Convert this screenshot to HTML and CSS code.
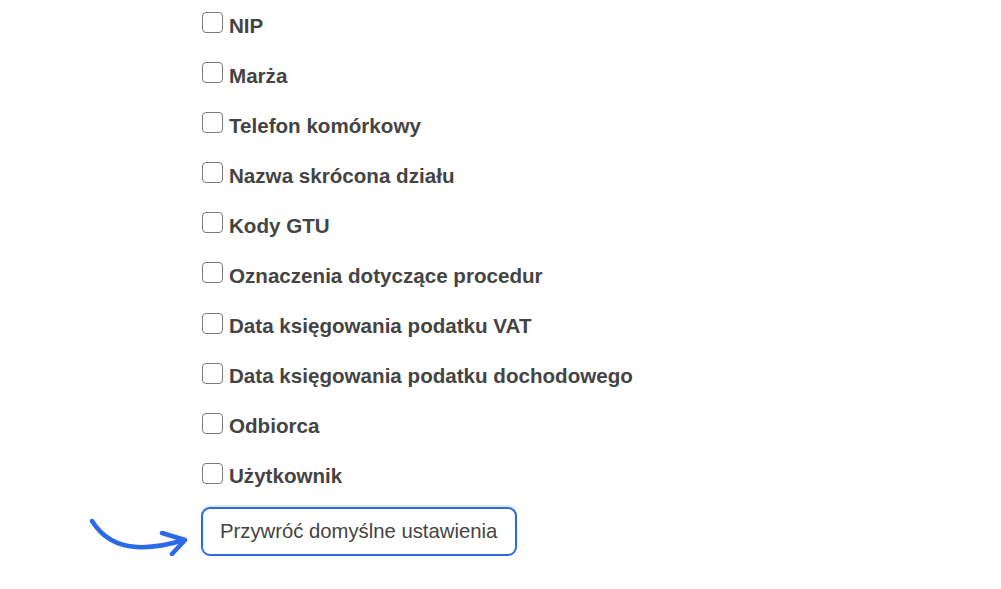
FILE: index.html
```html
<!DOCTYPE html>
<html lang="pl">
<head>
  <meta charset="UTF-8">
  <meta name="viewport" content="width=device-width, initial-scale=1.0">
  <title>Ustawienia kolumn</title>
  <link rel="stylesheet" href="styles.css">
</head>
<body>
  <div class="columns-panel">
    <ul class="column-list">
      <li><label class="column-option"><input type="checkbox"><span>NIP</span></label></li>
      <li><label class="column-option"><input type="checkbox"><span>Marża</span></label></li>
      <li><label class="column-option"><input type="checkbox"><span>Telefon komórkowy</span></label></li>
      <li><label class="column-option"><input type="checkbox"><span>Nazwa skrócona działu</span></label></li>
      <li><label class="column-option"><input type="checkbox"><span>Kody GTU</span></label></li>
      <li><label class="column-option"><input type="checkbox"><span>Oznaczenia dotyczące procedur</span></label></li>
      <li><label class="column-option"><input type="checkbox"><span>Data księgowania podatku VAT</span></label></li>
      <li><label class="column-option"><input type="checkbox"><span>Data księgowania podatku dochodowego</span></label></li>
      <li><label class="column-option"><input type="checkbox"><span>Odbiorca</span></label></li>
      <li><label class="column-option"><input type="checkbox"><span>Użytkownik</span></label></li>
    </ul>

    <div class="reset-row">
      <!-- hint arrow pointing at the reset button -->
      <svg class="hint-arrow" width="110" height="50" viewBox="0 0 110 50">
        <path d="M7 9 C 17 25, 32 34, 52 35 C 70 36, 86 32, 99 28" fill="none" stroke="#2a6ae6" stroke-width="4.5" stroke-linecap="round"/>
        <path d="M77 21 L 100 28 L 87 42" fill="none" stroke="#2a6ae6" stroke-width="4.5" stroke-linecap="round" stroke-linejoin="round"/>
      </svg>
      <button class="reset-btn" type="button">Przywróć domyślne ustawienia</button>
    </div>
  </div>
</body>
</html>
```

FILE: styles.css
```css
body {
  margin: 0;
  background: #fff;
  font-family: "Liberation Sans", Arial, sans-serif;
  color: #333;
}

.columns-panel {
  padding-left: 202px;
  padding-top: 12px;
}

.column-list {
  list-style: none;
  margin: 0;
  padding: 0;
}

.column-list li {
  height: 50.1px;
}

.column-option {
  display: flex;
  align-items: center;
  height: 21px;
  font-size: 20.6px;
  font-weight: bold;
  color: #444;
}

.column-option input {
  appearance: none;
  -webkit-appearance: none;
  width: 21px;
  height: 21px;
  margin: 0 6px 0 0;
  border: 1.5px solid #7a7a7a;
  border-radius: 4px;
  background: #fff;
  box-sizing: border-box;
}

.column-option span {
  position: relative;
  top: 3px;
}

.reset-row {
  position: relative;
  margin-top: -6px;
}

.hint-arrow {
  position: absolute;
  left: -117px;
  top: 5px;
}

.reset-btn {
  height: 49px;
  width: 316px;
  margin-left: -1px;
  padding: 0 17px;
  font-family: "Liberation Sans", Arial, sans-serif;
  font-size: 20.3px;
  color: #444;
  background: #fff;
  border: 2px solid #2a6ae6;
  border-radius: 9px;
  box-shadow: 0 -2px 0 #e6e6e6;
  text-align: left;
}
```
